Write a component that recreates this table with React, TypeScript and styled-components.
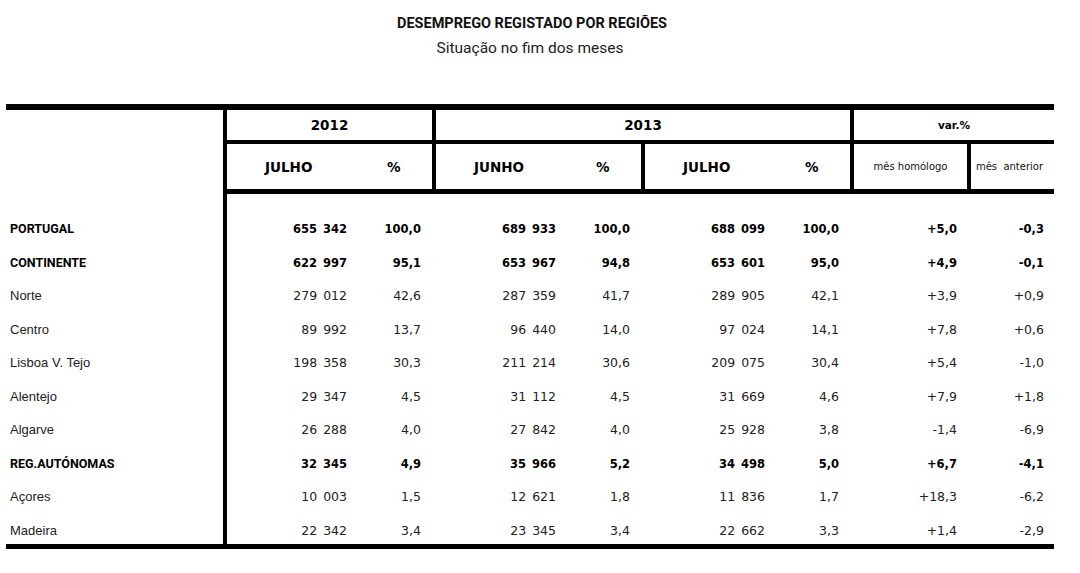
import styled, { createGlobalStyle } from 'styled-components';

const GlobalStyle = createGlobalStyle`
  html, body {
    margin: 0;
    padding: 0;
    background: #fff;
  }
  body {
    font-family: "Liberation Sans", Arial, sans-serif;
    color: #000;
  }
`;

type Region = { label: string; strong?: boolean; values: string[] };

const REGIONS: Region[] = [
  { label: 'PORTUGAL', strong: true, values: ['655 342', '100,0', '689 933', '100,0', '688 099', '100,0', '+5,0', '-0,3'] },
  { label: 'CONTINENTE', strong: true, values: ['622 997', '95,1', '653 967', '94,8', '653 601', '95,0', '+4,9', '-0,1'] },
  { label: 'Norte', values: ['279 012', '42,6', '287 359', '41,7', '289 905', '42,1', '+3,9', '+0,9'] },
  { label: 'Centro', values: ['89 992', '13,7', '96 440', '14,0', '97 024', '14,1', '+7,8', '+0,6'] },
  { label: 'Lisboa V. Tejo', values: ['198 358', '30,3', '211 214', '30,6', '209 075', '30,4', '+5,4', '-1,0'] },
  { label: 'Alentejo', values: ['29 347', '4,5', '31 112', '4,5', '31 669', '4,6', '+7,9', '+1,8'] },
  { label: 'Algarve', values: ['26 288', '4,0', '27 842', '4,0', '25 928', '3,8', '-1,4', '-6,9'] },
  { label: 'REG.AUTÓNOMAS', strong: true, values: ['32 345', '4,9', '35 966', '5,2', '34 498', '5,0', '+6,7', '-4,1'] },
  { label: 'Açores', values: ['10 003', '1,5', '12 621', '1,8', '11 836', '1,7', '+18,3', '-6,2'] },
  { label: 'Madeira', values: ['22 342', '3,4', '23 345', '3,4', '22 662', '3,3', '+1,4', '-2,9'] },
];

// right padding of each value column, so the figures line up under the headers
const COL_PAD = [0, 15, 0, 15, 0, 15, 14, 10];

const App = () => {
  return (
    <>
      <GlobalStyle />
      <Page>
        <Heading>
          <Title>DESEMPREGO REGISTADO POR REGIÕES</Title>
          <Subtitle>Situação no fim dos meses</Subtitle>
        </Heading>

        <Table>
          <Head>
            <Stub />

            <Group $width={209}>
              <YearCell>2012</YearCell>
              <SubRow>
                <MonthCell>
                  <Month>JULHO</Month>
                  <Pct>%</Pct>
                </MonthCell>
              </SubRow>
            </Group>

            <Group $width={418}>
              <YearCell>2013</YearCell>
              <SubRow>
                <MonthCell>
                  <Month>JUNHO</Month>
                  <Pct>%</Pct>
                </MonthCell>
                <MonthCell $divided>
                  <Month>JULHO</Month>
                  <Pct>%</Pct>
                </MonthCell>
              </SubRow>
            </Group>

            <Group $width={204}>
              <YearCell $small>var.%</YearCell>
              <SubRow>
                <VarCell $width={113}>mês homólogo</VarCell>
                <VarCell $width={87} $divided>mês  anterior</VarCell>
              </SubRow>
            </Group>
          </Head>

          <Body>
            {REGIONS.map(region => (
              <DataRow key={region.label}>
                <Label $strong={region.strong}>{region.label}</Label>
                {region.values.map((v, i) => (
                  <Value key={i} $strong={region.strong} $pad={COL_PAD[i]}>{v}</Value>
                ))}
              </DataRow>
            ))}
          </Body>
        </Table>
      </Page>
    </>
  );
};

export default App;

const Page = styled.div`
  width: 1048px;
  padding-left: 6px;
`;

const Heading = styled.div`
  display: flex;
  flex-direction: column;
  align-items: center;
  padding-top: 15px;
  height: 89px;
`;

const Title = styled.h1`
  margin: 0 0 0 4px;
  font-family: Roboto, "Liberation Sans", sans-serif;
  font-weight: 700;
  font-size: 14.5px;
  line-height: 18px;
  color: #111;
`;

const Subtitle = styled.h2`
  margin: 6px 0 0;
  font-family: Roboto, "Liberation Sans", sans-serif;
  font-weight: 400;
  font-size: 15.5px;
  line-height: 18px;
  color: #222;
`;

const Table = styled.div`
  border-top: 6px solid #000;
  border-bottom: 5px solid #000;
`;

const Head = styled.div`
  display: flex;
  height: 84px;
`;

const Stub = styled.div`
  width: 217px;
`;

const Group = styled.div<{ $width: number }>`
  box-sizing: border-box;
  width: ${p => p.$width}px;
  border-left: 4px solid #000;
  display: flex;
  flex-direction: column;
`;

const YearCell = styled.div<{ $small?: boolean }>`
  box-sizing: border-box;
  height: 34px;
  border-bottom: 4px solid #000;
  display: flex;
  align-items: center;
  justify-content: center;
  font-family: "DejaVu Sans", sans-serif;
  font-weight: 700;
  font-size: ${p => (p.$small ? '10.5px' : '13.5px')};
  color: #000;
`;

const SubRow = styled.div`
  box-sizing: border-box;
  height: 50px;
  border-bottom: 5px solid #000;
  display: flex;
`;

const MonthCell = styled.div<{ $divided?: boolean }>`
  box-sizing: border-box;
  width: ${p => (p.$divided ? 209 : 205)}px;
  border-left: ${p => (p.$divided ? '4px solid #000' : 'none')};
  display: flex;
  align-items: center;
  padding-left: 38px;
  font-family: "DejaVu Sans", sans-serif;
  font-weight: 700;
  font-size: 13.5px;
`;

const Month = styled.span`
  width: 122px;
`;

const Pct = styled.span``;

const VarCell = styled.div<{ $width: number; $divided?: boolean }>`
  box-sizing: border-box;
  width: ${p => p.$width}px;
  border-left: ${p => (p.$divided ? '4px solid #000' : 'none')};
  padding-right: ${p => (p.$divided ? 6 : 0)}px;
  display: flex;
  align-items: center;
  justify-content: center;
  white-space: pre;
  font-family: "DejaVu Sans", sans-serif;
  font-size: 10px;
  color: #111;
`;

const Body = styled.div`
  padding: 11.5px 0 3.5px;
  background: linear-gradient(#000, #000) 217px 0 / 4px 100% no-repeat;
`;

const DataRow = styled.div`
  display: grid;
  grid-template-columns: 221px 120px 89px 120px 89px 120px 89px 117px 83px;
  height: 33.5px;
  align-items: end;
  line-height: 20px;
`;

const Label = styled.div<{ $strong?: boolean }>`
  padding-left: 4px;
  font-family: ${p => (p.$strong ? 'Roboto, "Liberation Sans", sans-serif' : '"Liberation Sans", sans-serif')};
  font-weight: ${p => (p.$strong ? 700 : 400)};
  font-size: ${p => (p.$strong ? '12.5px' : '13px')};
  color: ${p => (p.$strong ? '#000' : '#222')};
`;

const Value = styled.div<{ $strong?: boolean; $pad: number }>`
  text-align: right;
  padding-right: ${p => p.$pad}px;
  font-family: "DejaVu Sans", sans-serif;
  font-weight: ${p => (p.$strong ? 700 : 400)};
  font-size: ${p => (p.$strong ? '11.5px' : '12.5px')};
  word-spacing: ${p => (p.$strong ? '2px' : '2px')};
  color: ${p => (p.$strong ? '#000' : '#222')};
`;
